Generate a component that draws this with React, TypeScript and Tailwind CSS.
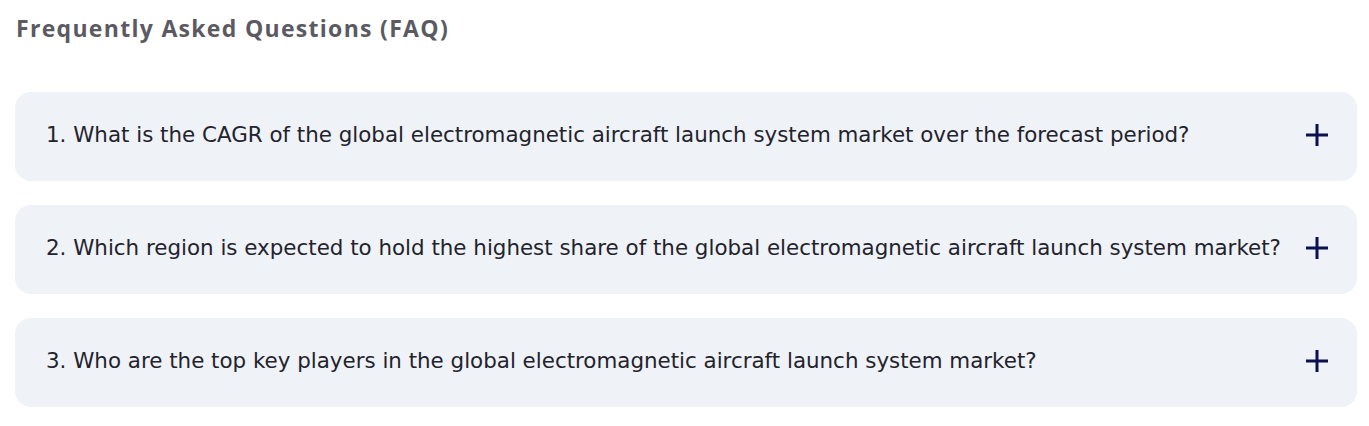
import React from 'react';

const questions = [
  '1. What is the CAGR of the global electromagnetic aircraft launch system market over the forecast period?',
  '2. Which region is expected to hold the highest share of the global electromagnetic aircraft launch system market?',
  '3. Who are the top key players in the global electromagnetic aircraft launch system market?',
];

const Plus = () => (
  <svg width="22" height="22" viewBox="0 0 22 22" className="shrink-0 -mt-[3px]">
    <path d="M11 0v22M0 11h22" stroke="#0b1150" strokeWidth="3" />
  </svg>
);

const App = () => {
  return (
    <div className="w-[1369px] h-[426px] bg-white pl-[15px] pr-[12px] pt-[12px]">
      <h2 className="text-[23px] leading-[32px] font-bold text-[#5b5a62] pl-[1px] font-['Open_Sans',sans-serif] tracking-[1.3px]">
        Frequently Asked Questions (FAQ)
      </h2>
      <div className="mt-[48px] flex flex-col gap-[24px]">
        {questions.map((q) => (
          <div
            key={q}
            className="h-[89px] rounded-[16px] bg-[#eff2f7] flex items-center justify-between pl-[31px] pr-[29px]"
          >
            <span className="text-[21.4px] text-[#23232d] font-['DejaVu_Sans',sans-serif] -mt-[3px]">{q}</span>
            <Plus />
          </div>
        ))}
      </div>
    </div>
  );
};

export default App;
